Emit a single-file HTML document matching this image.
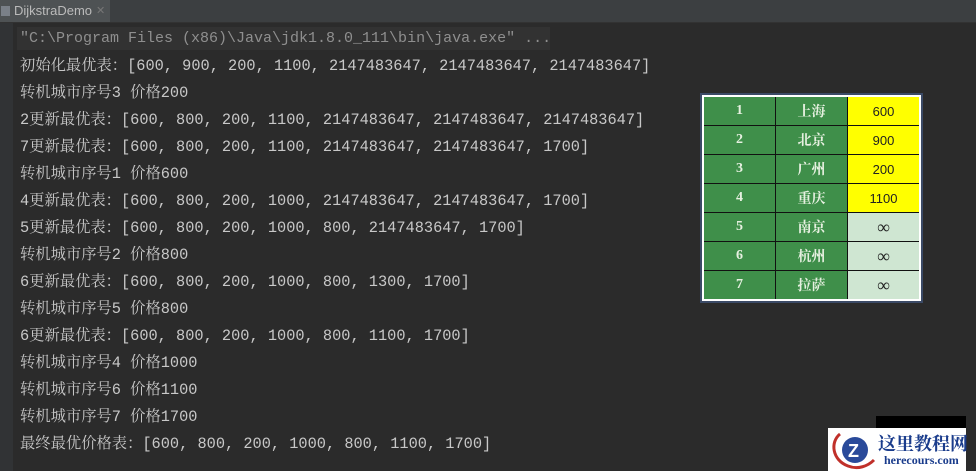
<!DOCTYPE html>
<html><head><meta charset="utf-8"><style>
html,body{margin:0;padding:0;width:976px;height:471px;overflow:hidden;background:#2b2b2b;}
.tabbar{position:absolute;left:0;top:0;width:976px;height:22px;background:#3c3f41;border-bottom:1px solid #323232;}
.tab{position:absolute;left:0;top:0;width:110px;height:22px;background:#4e5254;color:#bbb;font:13px "Liberation Sans",sans-serif;line-height:22px;}
.tab .ic{position:absolute;left:1px;top:6px;width:9px;height:10px;background:#7a8088;}
.tab .t{position:absolute;left:14px;}
.tab .x{position:absolute;left:96px;color:#777;font-size:11px;}
.gut{position:absolute;left:0;top:23px;width:13px;height:448px;background:#313335;}
.hl{position:absolute;left:17px;top:27px;width:533px;height:23px;background:#323232;}
.l{position:absolute;left:20px;font:15.3px "Liberation Mono","Noto Serif CJK SC",monospace;color:#c8c8c8;white-space:pre;line-height:20px;}
.l .c{font-family:"Noto Serif CJK SC",serif;font-size:16px;}
.l.g{color:#8f8f8f;font-size:15px;}
table{position:absolute;left:702px;top:95px;border-collapse:collapse;border:2px solid #fff;outline:2px solid #3b4a66;}
td{width:71px;height:28px;border:1px solid #111;text-align:center;font:bold 14px "Liberation Serif","Noto Serif CJK SC",serif;color:#e6f0e0;background:#3f8f4a;padding:0;}
td.y{background:#ffff00;color:#222;font-weight:normal;font-family:"Liberation Sans",sans-serif;font-size:13px;}
td.c{background:#cfe6d2;color:#222;font-weight:normal;font-size:18px;}
.wm1{position:absolute;left:876px;top:416px;width:90px;height:14px;background:#000;}
.wm{position:absolute;left:828px;top:428px;width:138px;height:43px;background:#fff;}
</style></head><body>
<div class="tabbar"><div class="tab"><span class="ic"></span><span class="t">DijkstraDemo</span><span class="x">✕</span></div></div>
<div class="gut"></div>
<div class="hl"></div>
<div class="l g" style="top:29px">"C:\Program Files (x86)\Java\jdk1.8.0_111\bin\java.exe" ...</div>
<div class="l" style="top:56px">初始化最优表：[600, 900, 200, 1100, 2147483647, 2147483647, 2147483647]</div>
<div class="l" style="top:83px">转机城市序号3 价格200</div>
<div class="l" style="top:110px">2更新最优表：[600, 800, 200, 1100, 2147483647, 2147483647, 2147483647]</div>
<div class="l" style="top:137px">7更新最优表：[600, 800, 200, 1100, 2147483647, 2147483647, 1700]</div>
<div class="l" style="top:164px">转机城市序号1 价格600</div>
<div class="l" style="top:191px">4更新最优表：[600, 800, 200, 1000, 2147483647, 2147483647, 1700]</div>
<div class="l" style="top:218px">5更新最优表：[600, 800, 200, 1000, 800, 2147483647, 1700]</div>
<div class="l" style="top:245px">转机城市序号2 价格800</div>
<div class="l" style="top:272px">6更新最优表：[600, 800, 200, 1000, 800, 1300, 1700]</div>
<div class="l" style="top:299px">转机城市序号5 价格800</div>
<div class="l" style="top:326px">6更新最优表：[600, 800, 200, 1000, 800, 1100, 1700]</div>
<div class="l" style="top:353px">转机城市序号4 价格1000</div>
<div class="l" style="top:380px">转机城市序号6 价格1100</div>
<div class="l" style="top:407px">转机城市序号7 价格1700</div>
<div class="l" style="top:434px">最终最优价格表：[600, 800, 200, 1000, 800, 1100, 1700]</div>
<table>
<tr><td>1</td><td>上海</td><td class="y">600</td></tr>
<tr><td>2</td><td>北京</td><td class="y">900</td></tr>
<tr><td>3</td><td>广州</td><td class="y">200</td></tr>
<tr><td>4</td><td>重庆</td><td class="y">1100</td></tr>
<tr><td>5</td><td>南京</td><td class="c">∞</td></tr>
<tr><td>6</td><td>杭州</td><td class="c">∞</td></tr>
<tr><td>7</td><td>拉萨</td><td class="c">∞</td></tr>
</table>
<div class="wm1"></div>
<div class="wm">
<svg width="50" height="43" style="position:absolute;left:0;top:0"><path d="M12 6 C2 14 4 32 20 38 C30 42 40 38 46 32" stroke="#c0302a" stroke-width="3" fill="none"/><circle cx="27" cy="22" r="13" fill="#2a4a9a"/><text x="20" y="29" font-family="Liberation Sans" font-weight="bold" font-size="18" fill="#fff">Z</text></svg>
<div style="position:absolute;left:50px;top:2px;font:bold 18px 'Noto Serif CJK SC',serif;color:#1a3c8c;white-space:nowrap">这里教程网</div>
<div style="position:absolute;left:56px;top:25px;font:bold 12px 'Liberation Serif',serif;color:#1a3c8c;white-space:nowrap">herecours.com</div>
</div>
</body></html>
